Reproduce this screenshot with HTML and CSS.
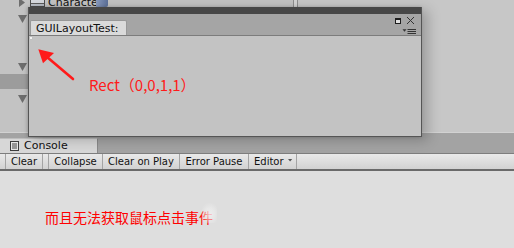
FILE: index.html
```html
<!DOCTYPE html>
<html>
<head>
<meta charset="utf-8">
<link rel="stylesheet" href="styles.css">
</head>
<body>
<div class="app">
  <div class="top">
    <div class="hier">
      <div class="row0">
        <span class="tri-right"></span>
        <svg class="goicon" width="15" height="7" viewBox="0 0 15 7">
          <rect x="0.5" y="-5" width="14" height="11.5" fill="#b7bcc4" stroke="#4e4e4e"/>
          <rect x="1" y="-4" width="13" height="7" fill="#d4d7dc"/>
          <line x1="1" y1="3.5" x2="14" y2="3.5" stroke="#5a5a5a"/>
        </svg>
        <span class="name">Character</span>
        <span class="bluebox"></span>
      </div>
      <div class="tri t1"></div>
      <div class="tri t2"></div>
      <div class="sel"></div>
      <div class="tri t3"></div>
    </div>
    <div class="divider"></div>
    <div class="inspector"></div>
  </div>

  <div class="console">
    <div class="tabbar">
      <div class="ctab">
        <svg class="cicon" width="9" height="10" viewBox="0 0 9 10">
          <rect x="0.5" y="0.5" width="8" height="9" fill="#e6e6e6" stroke="#3c3c3c"/>
          <line x1="2" y1="3" x2="7" y2="3" stroke="#444"/>
          <line x1="2" y1="5" x2="7" y2="5" stroke="#444"/>
          <line x1="2" y1="7" x2="7" y2="7" stroke="#444"/>
        </svg>
        <span>Console</span>
      </div>
    </div>
    <div class="toolbar">
      <span class="tb lead"></span>
      <span class="tb b-clear">Clear</span>
      <span class="tb gap"></span>
      <span class="tb b-collapse">Collapse</span>
      <span class="tb b-cop">Clear on Play</span>
      <span class="tb b-ep">Error Pause</span>
      <span class="tb b-editor">Editor<span class="dd"></span></span>
    </div>
    <div class="log">
      <p class="note">而且无法获取鼠标点击事<span class="fade">件</span></p>
    </div>
  </div>

  <div class="win">
    <div class="title"></div>
    <div class="tabs">
      <div class="wtab">GUILayoutTest:</div>
      <svg class="ctrls" width="22" height="20" viewBox="0 0 22 20">
        <rect x="0.5" y="3.5" width="5" height="5" fill="#e2e2e2" stroke="#1e1e1e"/>
        <rect x="0" y="3" width="6" height="2" fill="#1e1e1e"/>
        <line x1="12" y1="2" x2="19" y2="9" stroke="#333" stroke-width="1"/>
        <line x1="19" y1="2" x2="12" y2="9" stroke="#333" stroke-width="1"/>
        <polygon points="7.5,14.3 11.5,14.3 9.5,16.7" fill="#333"/>
        <line x1="12.5" y1="14.5" x2="21" y2="14.5" stroke="#333"/>
        <line x1="12.5" y1="16.5" x2="21" y2="16.5" stroke="#333"/>
        <line x1="12.5" y1="18.5" x2="21" y2="18.5" stroke="#333"/>
      </svg>
    </div>
    <div class="wbody">
      <div class="pt"></div>
      <svg class="arrow" width="60" height="50" viewBox="0 0 60 50">
        <line x1="44" y1="43" x2="18" y2="21" stroke="#ff1a1a" stroke-width="2.6" stroke-linecap="round"/>
        <polygon points="9.3,13.3 25,17 14,27.3" fill="#ff1a1a"/>
      </svg>
      <div class="label">Rect（0,0,1,1）</div>
    </div>
  </div>
</div>
</body>
</html>
```
FILE: styles.css
```css
body {
  margin: 0;
  width: 514px;
  height: 248px;
  overflow: hidden;
  background: #dedede;
  font-family: "DejaVu Sans", sans-serif;
}

.app {
  position: relative;
  width: 514px;
  height: 248px;
  overflow: hidden;
  display: flex;
  flex-direction: column;
}

/* ---------- top panels ---------- */
.top {
  flex: none;
  height: 132px;
  border-bottom: 1px solid #d2d2d2;
  display: flex;
  background: #c3c3c3;
}

.hier {
  width: 293px;
  display: flex;
  flex-direction: column;
}

.divider {
  width: 5px;
  box-sizing: border-box;
  border-left: 1px solid #8e8e8e;
  border-right: 1px solid #8e8e8e;
  background: #d3d3d3;
}

.inspector {
  flex: 1;
  background: #c7c7c7;
}

.row0 {
  height: 7px;
  overflow: hidden;
  display: flex;
  align-items: flex-start;
  flex: none;
}

.tri-right {
  width: 6px;
  height: 9px;
  margin: -2px 0 0 19px;
  background: #6d6d6d;
  clip-path: polygon(0 0, 100% 50%, 0 100%);
  flex: none;
}

.goicon {
  display: block;
  margin-left: 5px;
  flex: none;
}

.name {
  width: 48px;
  margin: -4px 0 0 3px;
  overflow: hidden;
  white-space: nowrap;
  font-size: 11px;
  line-height: 13px;
  color: #111;
  flex: none;
}

.bluebox {
  width: 12px;
  height: 7px;
  background: linear-gradient(to right, #8a9cc0, #5c7099);
  border-radius: 0 0 2px 0;
  flex: none;
}

.tri {
  width: 9px;
  height: 8px;
  margin-left: 18px;
  background: #6d6d6d;
  clip-path: polygon(0 0, 100% 0, 50% 100%);
  flex: none;
}

.t1 { margin-top: 8px; }
.t2 { margin-top: 40px; }
.t3 { margin-top: 6px; }

.sel {
  height: 15px;
  margin-top: 3px;
  background: #9c9c9c;
  flex: none;
}

/* ---------- console ---------- */
.console {
  flex: 1;
  display: flex;
  flex-direction: column;
}

.tabbar {
  flex: none;
  height: 20px;
  background: #a3a3a3;
  border-bottom: 1px solid #7d7d7d;
  display: flex;
  align-items: flex-end;
}

.ctab {
  width: 98px;
  height: 15px;
  box-sizing: border-box;
  background: #d7d7d7;
  border-right: 1px solid #8a8a8a;
  border-top: 1px solid #bdbdbd;
  display: flex;
  align-items: center;
  gap: 5px;
  padding-left: 10px;
  font-size: 11px;
  line-height: 14px;
  color: #111;
}

.cicon {
  display: block;
  flex: none;
}

.toolbar {
  flex: none;
  height: 15px;
  display: flex;
  background: linear-gradient(#e9e9e9, #d2d2d2);
  border-bottom: 2px solid #6a6a6a;
  font-size: 10px;
  line-height: 15px;
  color: #111;
}

.tb {
  box-sizing: border-box;
  border-right: 1px solid #a4a4a4;
  text-align: center;
  white-space: nowrap;
  flex: none;
}

.lead { width: 6px; }
.b-clear { width: 37px; }
.gap { width: 6px; }
.b-collapse { width: 54px; }
.b-cop { width: 77px; }
.b-ep { width: 69px; }
.b-editor {
  width: 48px;
  text-align: left;
  padding-left: 5px;
  display: flex;
  align-items: center;
}

.dd {
  width: 5px;
  height: 3px;
  margin-left: 4px;
  margin-top: -3px;
  background: #555;
  clip-path: polygon(0 0, 100% 0, 50% 100%);
}

.log {
  flex: 1;
  background: #dedede;
  padding: 39px 0 0 45px;
}

.note {
  margin: 0;
  font-family: "Noto Sans CJK SC", sans-serif;
  font-size: 14px;
  line-height: 14px;
  color: #ff0000;
}

.fade {
  position: relative;
}

.fade::after {
  content: "";
  position: absolute;
  left: 2px;
  top: -4px;
  width: 16px;
  height: 20px;
  background: radial-gradient(ellipse at 55% 55%, rgba(240,240,240,0.85) 0%, rgba(240,240,240,0.5) 40%, rgba(240,240,240,0) 75%);
}

/* ---------- floating window ---------- */
.win {
  position: absolute;
  left: 28px;
  top: 7px;
  width: 394px;
  height: 130px;
  box-sizing: border-box;
  border: 1px solid #555;
  border-top: none;
  background: #c3c3c3;
  box-shadow: 6px 3px 12px rgba(0, 0, 0, 0.22), -1px 0 3px rgba(0, 0, 0, 0.18);
  display: flex;
  flex-direction: column;
}

.title {
  flex: none;
  height: 7px;
  background: #474747;
}

.tabs {
  flex: none;
  height: 21px;
  background: #a5a5a5;
  border-bottom: 1px solid #7c7c7c;
  display: flex;
  align-items: flex-start;
}

.wtab {
  margin: 6px 0 0 1px;
  width: 97px;
  height: 15px;
  box-sizing: border-box;
  padding: 2px 0 0 5px;
  background: #dadada;
  border: 1px solid #989898;
  border-bottom: none;
  border-radius: 2px 2px 0 0;
  font-size: 11px;
  line-height: 12px;
  color: #111;
  white-space: nowrap;
  overflow: hidden;
}

.ctrls {
  display: block;
  margin: 1px 4px 0 auto;
  flex: none;
}

.wbody {
  flex: 1;
  position: relative;
}

.pt {
  width: 2px;
  height: 2px;
  margin: 1px 0 0 1px;
  background: #f2f2f2;
  box-shadow: 0 0 1px #9a9a9a;
}

.arrow {
  position: absolute;
  left: 0;
  top: 0;
  display: block;
}

.label {
  position: absolute;
  left: 60px;
  top: 41px;
  font-family: "Noto Sans CJK SC", sans-serif;
  font-size: 15px;
  line-height: 15px;
  color: #ff1a1a;
  white-space: nowrap;
}
```
